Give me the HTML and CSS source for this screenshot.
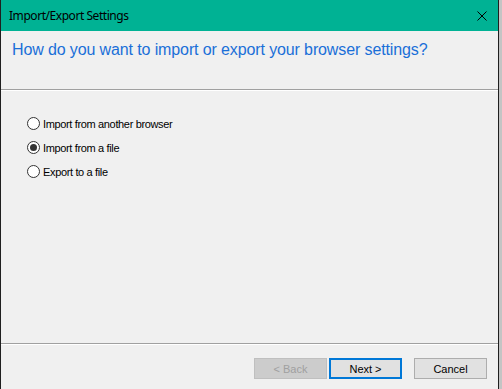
FILE: index.html
```html
<!DOCTYPE html>
<html>
<head>
  <title>Import/Export Settings</title>
  <meta name="viewport" content="width=device-width, initial-scale=1.0">
  <link rel="stylesheet" href="styles.css">
</head>
<body>
  <div class="window">
    <div class="title-bar">
      <span class="title">Import/Export Settings</span>
      <span class="close-button">
        <svg width="10" height="10" viewBox="0 0 10 10">
          <path d="M0.5 0.5 L9.5 9.5 M9.5 0.5 L0.5 9.5" stroke="#000" stroke-width="1" fill="none"/>
        </svg>
      </span>
    </div>

    <div class="header">
      <h1>How do you want to import or export your browser settings?</h1>
    </div>
    <div class="separator"></div>

    <div class="content">
      <label class="option">
        <span class="radio"></span>
        <span>Import from another browser</span>
      </label>
      <label class="option">
        <span class="radio checked"></span>
        <span>Import from a file</span>
      </label>
      <label class="option">
        <span class="radio"></span>
        <span>Export to a file</span>
      </label>
    </div>

    <div class="separator"></div>
    <div class="footer">
      <button class="disabled">&lt; Back</button>
      <button class="default">Next &gt;</button>
      <button class="cancel">Cancel</button>
    </div>
  </div>
</body>
</html>
```

FILE: styles.css
```css
* {
  box-sizing: border-box;
}

body {
  margin: 0;
  background-color: #c4c4c4;
  font-family: 'Liberation Sans', Arial, sans-serif;
  overflow: hidden;
}

.window {
  width: 499px;
  height: 400px;
  display: flex;
  flex-direction: column;
  background-color: #f0f0f0;
  border-left: 1px solid #1f1f1f;
  border-right: 1px solid #1f1f1f;
}

.title-bar {
  height: 31px;
  flex-shrink: 0;
  display: flex;
  align-items: center;
  justify-content: space-between;
  background-color: #00b294;
  padding-left: 8px;
  padding-right: 11px;
}

.title {
  font-family: 'Noto Sans', sans-serif;
  font-size: 12px;
  letter-spacing: -0.45px;
  color: #000;
}

.close-button {
  display: flex;
  margin-top: 1px;
}

.header {
  height: 58px;
  flex-shrink: 0;
}

.header h1 {
  margin: 0;
  padding: 10px 0 0 11px;
  font-size: 16px;
  letter-spacing: -0.12px;
  font-weight: normal;
  color: #1a6fd8;
}

.separator {
  flex-shrink: 0;
  border-top: 1px solid #a0a0a0;
  border-bottom: 1px solid #fff;
}

.content {
  flex: 1;
  display: flex;
  flex-direction: column;
  gap: 11px;
  padding: 26px 0 0 26px;
}

.option {
  display: flex;
  align-items: center;
  gap: 3px;
  font-size: 11px;
  letter-spacing: -0.35px;
  color: #000;
  height: 13px;
}

.radio {
  width: 13px;
  height: 13px;
  border: 1px solid #333;
  border-radius: 50%;
  background-color: #fff;
  display: flex;
  align-items: center;
  justify-content: center;
}

.radio.checked::after {
  content: '';
  width: 7px;
  height: 7px;
  border-radius: 50%;
  background-color: #333;
}

.footer {
  height: 55px;
  flex-shrink: 0;
  display: flex;
  padding: 13px 0 0 253px;
}

.footer button {
  width: 73px;
  height: 21px;
  margin: 0;
  padding: 0;
  font-family: 'Liberation Sans', Arial, sans-serif;
  font-size: 11px;
  color: #000;
  background-color: #e1e1e1;
  border: 1px solid #adadad;
}

.footer button.disabled {
  color: #a0a0a0;
  background-color: #cccccc;
  border-color: #bfbfbf;
}

.footer button.default {
  margin-left: 2px;
  border: 2px solid #0078d7;
}

.footer button.cancel {
  margin-left: 12px;
}
```
